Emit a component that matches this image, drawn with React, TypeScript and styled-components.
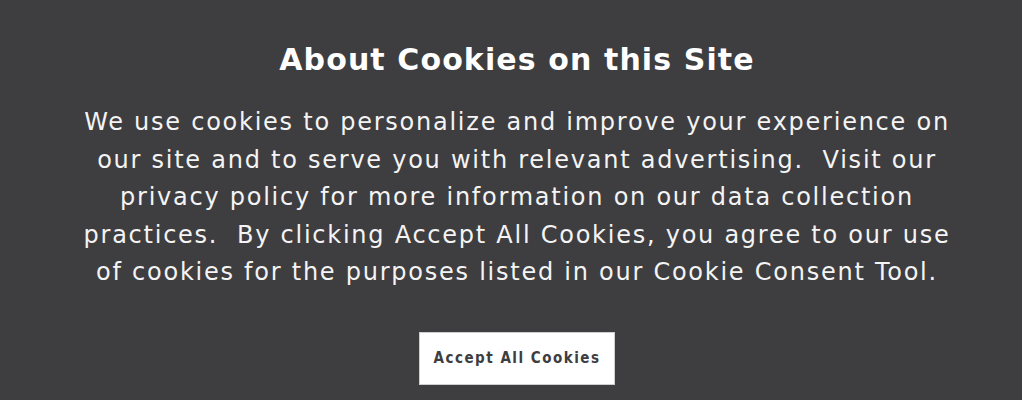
import * as React from 'react';
import styled, { createGlobalStyle } from 'styled-components';

const GlobalStyle = createGlobalStyle`
  html, body {
    margin: 0;
    padding: 0;
    background: #3e3d40;
  }
`;

const lines = [
  'We use cookies to personalize and improve your experience on',
  'our site and to serve you with relevant advertising.\u00a0 Visit our',
  'privacy policy for more information on our data collection',
  'practices.\u00a0 By clicking Accept All Cookies, you agree to our use',
  'of cookies for the purposes listed in our Cookie Consent Tool.',
];

export default function App() {
  return (
    <>
      <GlobalStyle />
      <Banner>
        <Title>About Cookies on this Site</Title>
        <Body>
          {lines.map((line) => (
            <Line key={line}>{line}</Line>
          ))}
        </Body>
        <AcceptButton type="button">Accept All Cookies</AcceptButton>
      </Banner>
    </>
  );
}

const Banner = styled.div`
  box-sizing: border-box;
  width: 1022px;
  height: 400px;
  padding: 40px 0 0 12px;
  display: flex;
  flex-flow: column nowrap;
  align-items: center;
  background: #3e3d40;
  color: #ffffff;
  overflow: hidden;
`;

const Title = styled.h2`
  margin: 0;
  font-family: 'DejaVu Sans', sans-serif;
  font-weight: 700;
  font-size: 30px;
  line-height: 40px;
  letter-spacing: 1.1px;
`;

const Body = styled.div`
  margin-top: 24px;
  text-align: center;
  font-family: 'DejaVu Sans', sans-serif;
  font-size: 24px;
  line-height: 37.5px;
  letter-spacing: 1.75px;
  color: #f4f4f4;
`;

const Line = styled.span`
  display: block;
  white-space: pre;
`;

const AcceptButton = styled.button`
  margin-top: 40px;
  width: 196px;
  height: 53px;
  border: 1px solid #cfcfcf;
  border-radius: 0;
  background: #ffffff;
  color: #3e3d40;
  font-family: 'DejaVu Sans Condensed', 'DejaVu Sans', sans-serif;
  font-weight: 700;
  font-size: 15px;
  letter-spacing: 1.5px;
  cursor: pointer;
`;
